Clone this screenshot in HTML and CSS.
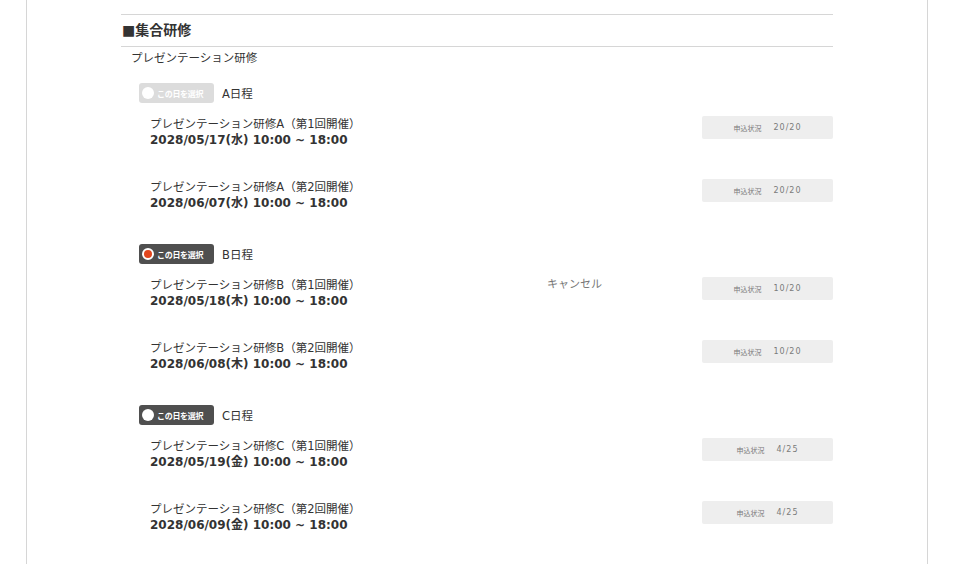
FILE: index.html
```html
<!DOCTYPE html>
<html lang="ja">
  <head>
    <meta charset="UTF-8" />
    <meta name="viewport" content="width=device-width, initial-scale=1.0" />
    <title>集合研修</title>
    <link rel="stylesheet" href="styles.css">
  </head>
  <body>
    <main class="page">
      <section class="course">
        <h2 class="course-title">■集合研修</h2>
        <p class="course-name">プレゼンテーション研修</p>

        <div class="day">
          <div class="day-head">
            <span class="pick pick-off"><i class="dot"></i>この日を選択</span>
            <span class="day-label">A日程</span>
          </div>
          <div class="session">
            <div class="session-info">
              <p class="session-title">プレゼンテーション研修A（第1回開催）</p>
              <p class="session-date">2028/05/17(水) 10:00 ~ 18:00</p>
            </div>
            <div class="session-note"></div>
            <div class="status"><span>申込状況</span><b>20/20</b></div>
          </div>
          <div class="session">
            <div class="session-info">
              <p class="session-title">プレゼンテーション研修A（第2回開催）</p>
              <p class="session-date">2028/06/07(水) 10:00 ~ 18:00</p>
            </div>
            <div class="session-note"></div>
            <div class="status"><span>申込状況</span><b>20/20</b></div>
          </div>
        </div>

        <div class="day">
          <div class="day-head">
            <span class="pick pick-on"><i class="dot"></i>この日を選択</span>
            <span class="day-label">B日程</span>
          </div>
          <div class="session">
            <div class="session-info">
              <p class="session-title">プレゼンテーション研修B（第1回開催）</p>
              <p class="session-date">2028/05/18(木) 10:00 ~ 18:00</p>
            </div>
            <div class="session-note">キャンセル</div>
            <div class="status"><span>申込状況</span><b>10/20</b></div>
          </div>
          <div class="session">
            <div class="session-info">
              <p class="session-title">プレゼンテーション研修B（第2回開催）</p>
              <p class="session-date">2028/06/08(木) 10:00 ~ 18:00</p>
            </div>
            <div class="session-note"></div>
            <div class="status"><span>申込状況</span><b>10/20</b></div>
          </div>
        </div>

        <div class="day">
          <div class="day-head">
            <span class="pick"><i class="dot"></i>この日を選択</span>
            <span class="day-label">C日程</span>
          </div>
          <div class="session">
            <div class="session-info">
              <p class="session-title">プレゼンテーション研修C（第1回開催）</p>
              <p class="session-date">2028/05/19(金) 10:00 ~ 18:00</p>
            </div>
            <div class="session-note"></div>
            <div class="status"><span>申込状況</span><b>4/25</b></div>
          </div>
          <div class="session">
            <div class="session-info">
              <p class="session-title">プレゼンテーション研修C（第2回開催）</p>
              <p class="session-date">2028/06/09(金) 10:00 ~ 18:00</p>
            </div>
            <div class="session-note"></div>
            <div class="status"><span>申込状況</span><b>4/25</b></div>
          </div>
        </div>
      </section>
    </main>
  </body>
</html>
```

FILE: styles.css
```css
body {
  margin: 0;
  padding: 0;
  background: #fff;
  color: #333;
  font-family: "DejaVu Sans", "Noto Sans CJK JP", sans-serif;
}
p {
  margin: 0;
}
.page {
  width: 900px;
  min-height: 600px;
  margin-left: 26px;
  padding-top: 14px;
  border-left: 1px solid #d6d6d6;
  border-right: 1px solid #d6d6d6;
}
.course {
  width: 712px;
  margin: 0 auto;
}
.course-title {
  margin: 0;
  padding: 5px 1px 5px;
  font-size: 14px;
  line-height: 21px;
  border-top: 1px solid #d6d6d6;
  border-bottom: 1px solid #d6d6d6;
}
.course-name {
  padding: 3px 0 0 10px;
  font-size: 11.5px;
  line-height: 16px;
  margin-bottom: 17px;
}
.day {
  padding: 0 0 2px 18px;
}
.day-head {
  display: flex;
  align-items: center;
  gap: 8px;
  margin-bottom: 13px;
}
.pick {
  display: inline-flex;
  align-items: center;
  width: 75px;
  height: 20px;
  box-sizing: border-box;
  padding-left: 3px;
  border-radius: 3px;
  background: #4f4f4f;
  color: #fff;
  font-size: 8px;
  font-weight: bold;
  letter-spacing: -0.3px;
}
.dot {
  width: 12px;
  height: 12px;
  margin-right: 3px;
  border-radius: 50%;
  background: #fff;
  box-sizing: border-box;
}
.pick-off {
  background: #dcdcdc;
}
.pick-on .dot {
  background: #e2461e;
  border: 2px solid #fff;
}
.day-label {
  font-size: 11.5px;
}
.session {
  display: grid;
  grid-template-columns: 397px 155px 131px;
  padding-left: 11px;
  margin-bottom: 31px;
}
.session-title {
  font-size: 11.5px;
  line-height: 16px;
}
.session-date {
  font-size: 12px;
  line-height: 16px;
  font-weight: bold;
}
.session-note {
  font-size: 11px;
  line-height: 16px;
  color: #777;
}
.status {
  display: flex;
  justify-content: center;
  align-items: center;
  gap: 12px;
  height: 23px;
  border-radius: 2px;
  background: #eeeeee;
  color: #7a7a7a;
  font-size: 8px;
}
.status span {
  font-size: 7px;
}
.status b {
  font-weight: normal;
  letter-spacing: 1px;
}
```
